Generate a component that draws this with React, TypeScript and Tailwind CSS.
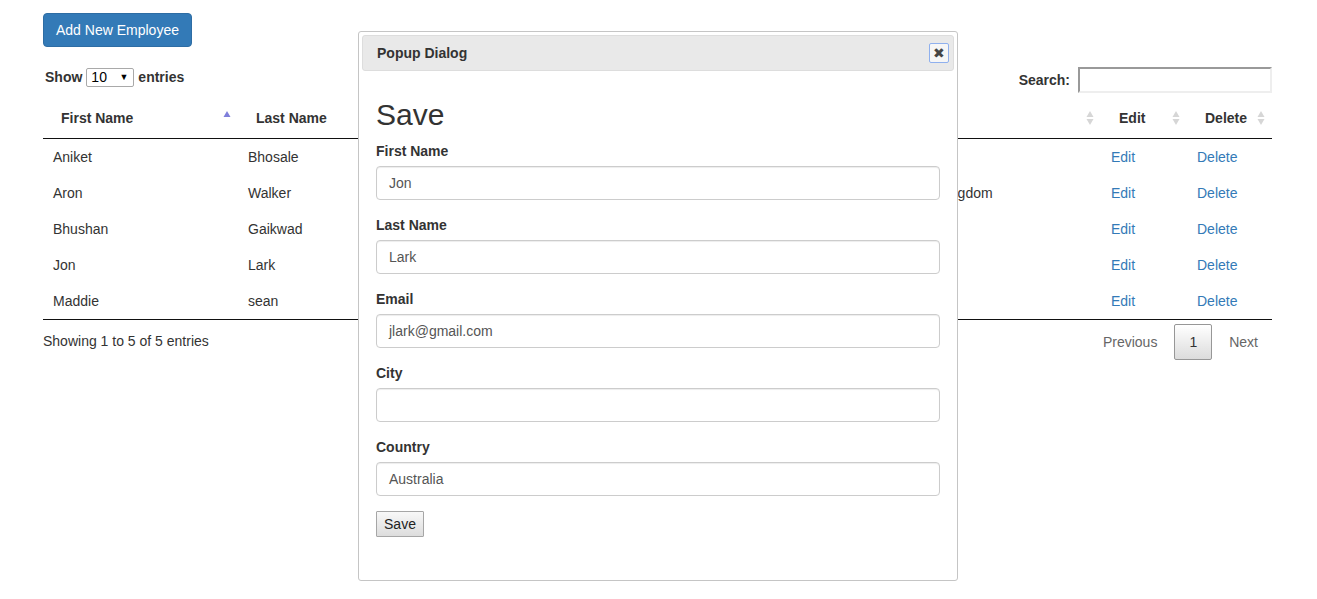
import React from "react";

const rows = [
  { first: "Aniket", last: "Bhosale", email: "aniket@gmail.com", city: "Pune", country: "India" },
  { first: "Aron", last: "Walker", email: "aron.walker@gmail.com", city: "London", country: "United Kingdom" },
  { first: "Bhushan", last: "Gaikwad", email: "bhushan@gmail.com", city: "Mumbai", country: "India" },
  { first: "Jon", last: "Lark", email: "jlark@gmail.com", city: "", country: "Australia" },
  { first: "Maddie", last: "sean", email: "maddie@gmail.com", city: "Toronto", country: "Canada" },
];

function SortBoth() {
  return (
    <svg width="8" height="16" viewBox="0 0 8 16" className="shrink-0">
      <polygon points="4,1 7.5,7 0.5,7" fill="#d6d6d6" />
      <polygon points="4,15 7.5,9 0.5,9" fill="#d6d6d6" />
    </svg>
  );
}

function SortAsc() {
  return (
    <svg width="8" height="16" viewBox="0 0 8 16" className="shrink-0">
      <polygon points="4,1 7.5,7 0.5,7" fill="#7f7fdb" />
    </svg>
  );
}

function Th({ label, asc }: { label: string; asc?: boolean }) {
  return (
    <th className="p-0 border-b border-[#111] text-left font-bold">
      <div className="flex items-center justify-between h-[40px] pl-[18px] pr-[7px]">
        <span>{label}</span>
        {asc ? <SortAsc /> : <SortBoth />}
      </div>
    </th>
  );
}

function Field({ label, value }: { label: string; value: string }) {
  return (
    <div className="mb-[15px]">
      <div className="font-bold leading-[20px] mb-[5px] text-[#333]">{label}</div>
      <div className="h-[34px] w-[564px] border border-[#ccc] rounded-[4px] px-[12px] flex items-center text-[#555] shadow-[inset_0_1px_1px_rgba(0,0,0,0.075)]">
        {value}
      </div>
    </div>
  );
}

export default function App() {
  return (
    <div
      className="relative h-[599px] w-[1317px] bg-white text-[14px] leading-[20px] text-[#333] overflow-hidden"
      style={{ fontFamily: '"Liberation Sans", Arial, Helvetica, sans-serif' }}
    >
      <div className="ml-[43px] w-[1229px] pt-[13px]">
        <button className="h-[34px] px-[12px] bg-[#337ab7] border border-[#2e6da4] rounded-[4px] text-white text-[14px] leading-[20px]">
          Add New Employee
        </button>

        <div className="mt-[20px] flex justify-between items-start h-[26px]">
          <div className="flex items-center h-[18px] mt-[1px] pl-[2px] font-bold">
            <span>Show</span>
            <div className="ml-[4px] h-[19px] w-[48px] border border-[#a9a9a9] rounded-[2px] flex items-center justify-between pl-[4px] pr-[5px] font-normal text-[14px] text-black">
              <span>10</span>
              <span className="text-[9px]">▼</span>
            </div>
            <span className="ml-[4px]">entries</span>
          </div>
          <div className="flex items-center h-[26px]">
            <span className="font-bold mr-[8px]">Search:</span>
            <div className="h-[26px] w-[194px] border-2 border-t-[#999] border-l-[#999] border-b-[#eee] border-r-[#eee]" />
          </div>
        </div>

        <table className="mt-[5px] w-[1229px] table-fixed border-collapse">
          <colgroup>
            <col className="w-[195px]" />
            <col className="w-[180px]" />
            <col className="w-[260px]" />
            <col className="w-[205px]" />
            <col className="w-[218px]" />
            <col className="w-[86px]" />
            <col className="w-[85px]" />
          </colgroup>
          <thead>
            <tr>
              <Th label="First Name" asc />
              <Th label="Last Name" />
              <Th label="Email" />
              <Th label="City" />
              <Th label="Country" />
              <Th label="Edit" />
              <Th label="Delete" />
            </tr>
          </thead>
          <tbody>
            {rows.map((r, i) => (
              <tr key={r.first} className={i === rows.length - 1 ? "border-b border-[#111]" : ""}>
                <td className="px-[10px] py-[8px]">{r.first}</td>
                <td className="px-[10px] py-[8px]">{r.last}</td>
                <td className="px-[10px] py-[8px]">{r.email}</td>
                <td className="px-[10px] py-[8px]">{r.city}</td>
                <td className="px-[10px] py-[8px] whitespace-nowrap">{r.country}</td>
                <td className="px-[10px] py-[8px] text-[#337ab7]">Edit</td>
                <td className="px-[10px] py-[8px] text-[#337ab7]">Delete</td>
              </tr>
            ))}
          </tbody>
        </table>

        <div className="flex justify-between items-start">
          <div className="pt-[11px]">Showing 1 to 5 of 5 entries</div>
          <div className="pt-[4px] flex items-center">
            <span className="px-[14px] py-[7px] border border-transparent text-[#666]">Previous</span>
            <span className="ml-[2px] px-[14px] py-[7px] border border-[#979797] rounded-[2px] bg-gradient-to-b from-white to-[#dcdcdc] text-[#333]">
              1
            </span>
            <span className="ml-[2px] pl-[14px] pr-[13px] py-[7px] border border-transparent text-[#666]">Next</span>
          </div>
        </div>
      </div>

      {/* Dialog */}
      <div className="absolute left-[358px] top-[31px] w-[600px] h-[550px] bg-white border border-[#c5c5c5] rounded-[3px] p-[3px]">
        <div className="h-[36px] bg-[#e9e9e9] border border-[#dddddd] rounded-[3px] flex items-center justify-between pl-[14px] pr-[4px]">
          <span className="font-bold text-[14px]">Popup Dialog</span>
          <div className="w-[20px] h-[20px] border border-[#8fb0ee] rounded-[2px] bg-[#f6f6f6] flex items-center justify-center text-[#454545] text-[14px] leading-none">
            ✖
          </div>
        </div>
        <div className="pl-[14px] pt-[27px]">
          <div className="text-[30px] leading-[33px] mb-[10px] font-normal">Save</div>
          <Field label="First Name" value="Jon" />
          <Field label="Last Name" value="Lark" />
          <Field label="Email" value="jlark@gmail.com" />
          <Field label="City" value="" />
          <Field label="Country" value="Australia" />
          <button className="h-[26px] w-[48px] border border-[#a6a6a6] rounded-[1px] bg-gradient-to-b from-[#f8f8f8] to-[#dddddd] text-[14px] text-[#222] leading-[20px]">
            Save
          </button>
        </div>
      </div>
    </div>
  );
}
